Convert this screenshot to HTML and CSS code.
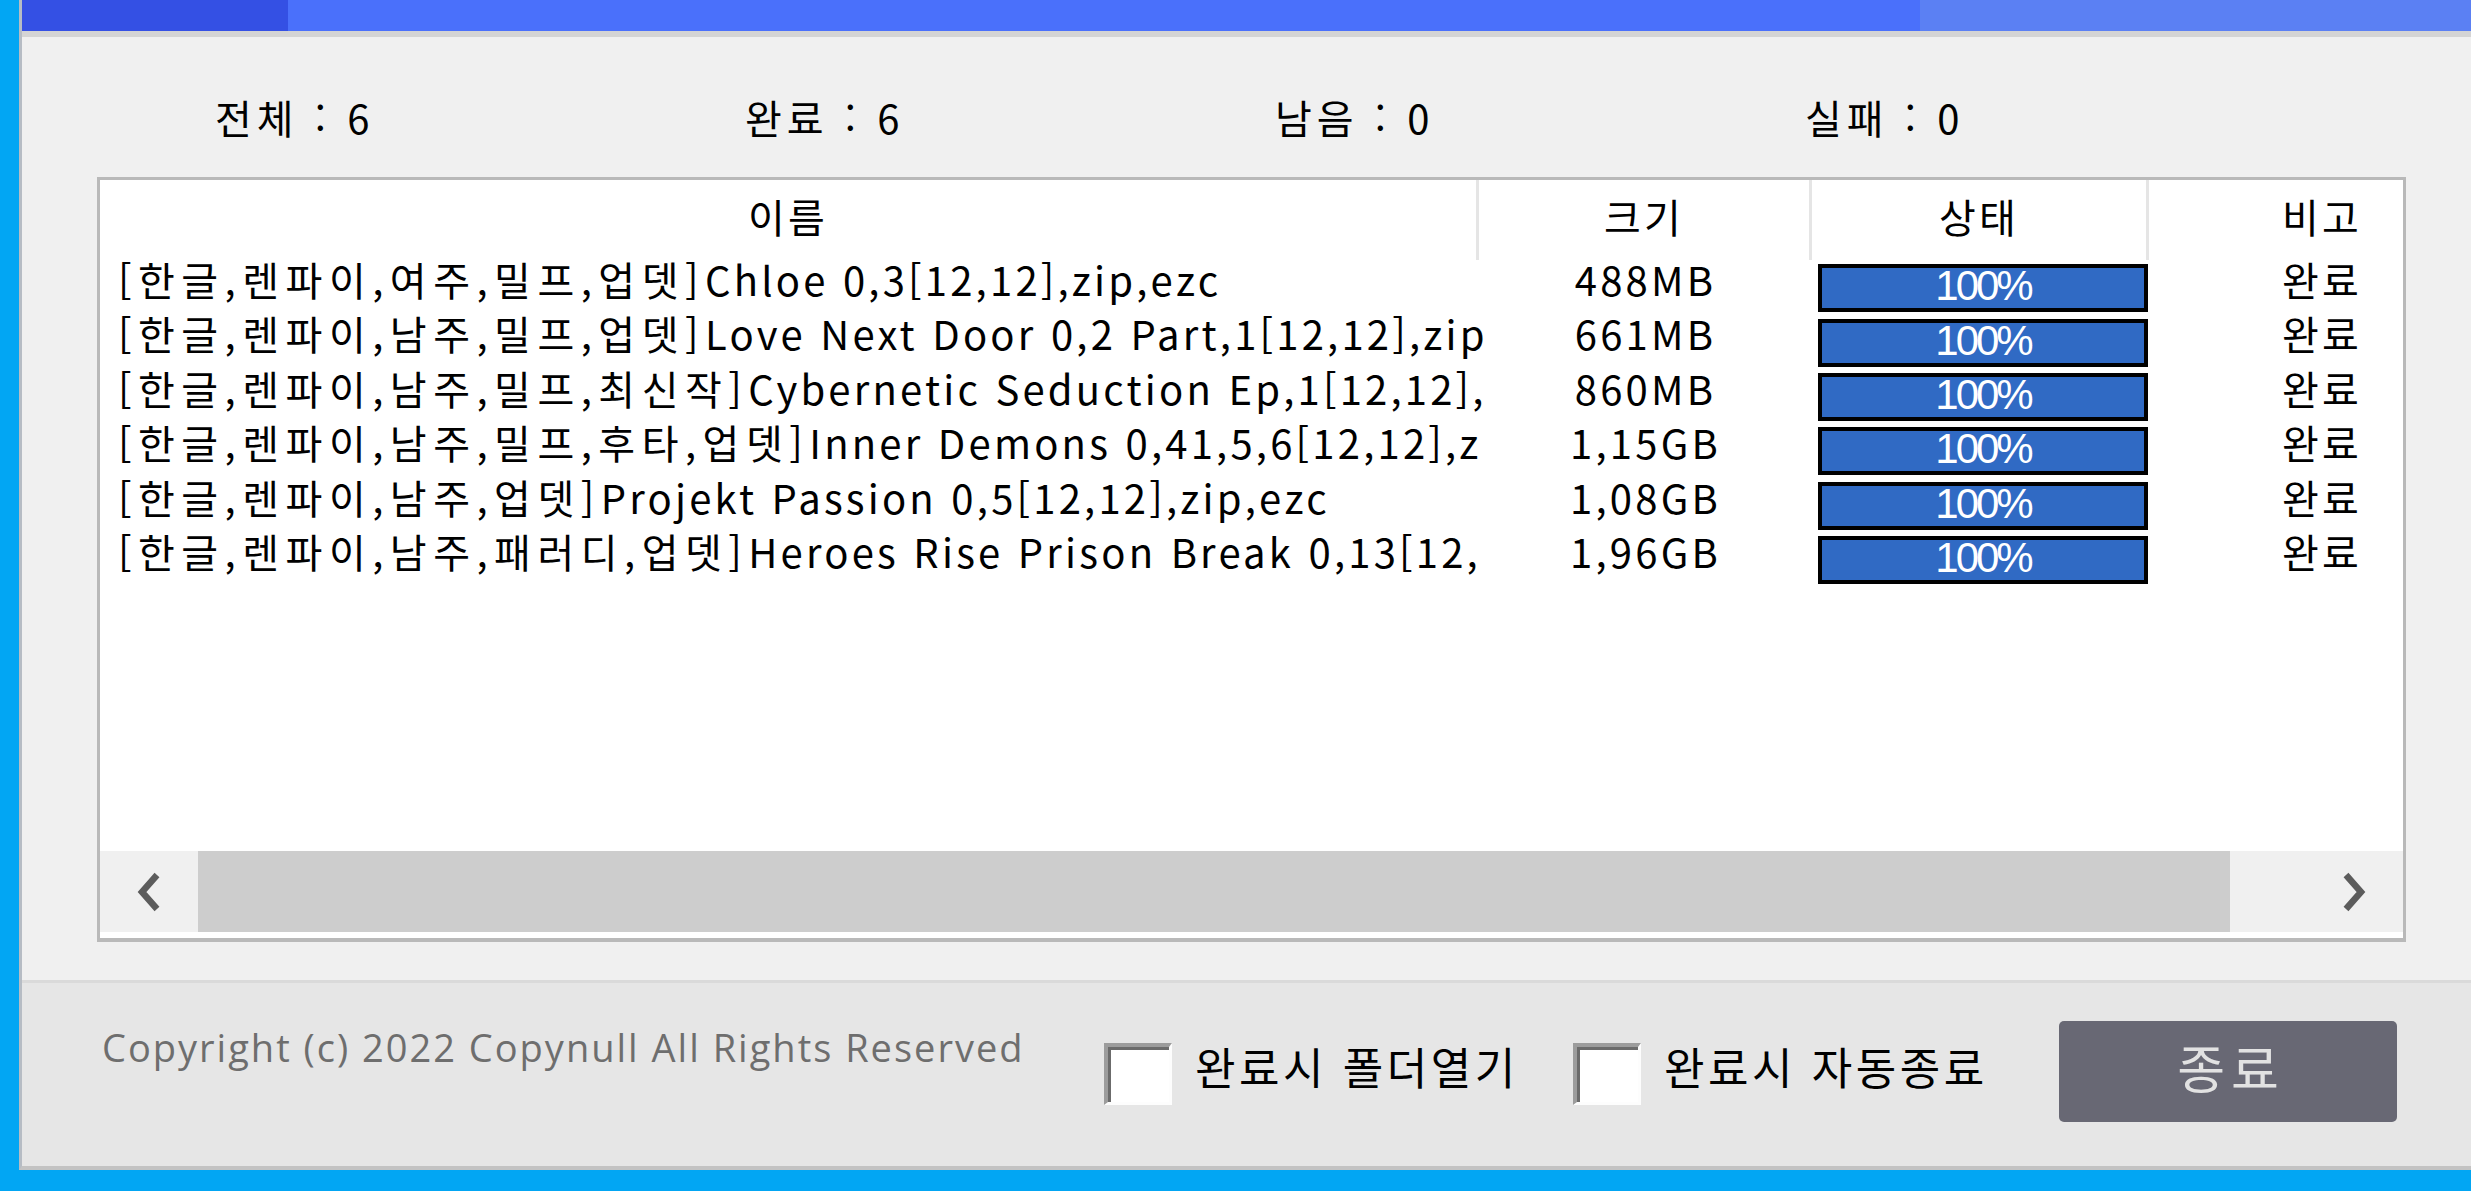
FILE: index.html
```html
<!DOCTYPE html>
<html lang="ko">
<head>
    <meta charset="UTF-8">
    <title>다운로드</title>
    <link rel="stylesheet" href="styles.css">
</head>
<body>

    <div class="window">
        <!-- Title strip -->
        <div class="titlebar">
            <div class="tab tab-active"></div>
            <div class="tab tab-mid"></div>
            <div class="tab tab-light"></div>
        </div>

        <div class="main">
            <!-- Counters -->
            <div class="stats">
                <span>전체 : 6</span>
                <span>완료 : 6</span>
                <span>남음 : 0</span>
                <span>실패 : 0</span>
            </div>

            <!-- File list -->
            <div class="list">
                <div class="list-view">
                    <div class="list-head">
                        <div class="head-cell">이름</div>
                        <div class="head-cell">크기</div>
                        <div class="head-cell">상태</div>
                        <div class="head-cell last">비고</div>
                    </div>

                    <div class="list-row">
                        <div class="cell-name"><span class="tag">[한글,렌파이,여주,밀프,업뎃]</span>Chloe 0,3[12,12],zip,ezc</div>
                        <div class="cell-size">488MB</div>
                        <div class="cell-state"><div class="bar">100%</div></div>
                        <div class="cell-note">완료</div>
                    </div>
                    <div class="list-row">
                        <div class="cell-name"><span class="tag">[한글,렌파이,남주,밀프,업뎃]</span>Love Next Door 0,2 Part,1[12,12],zip</div>
                        <div class="cell-size">661MB</div>
                        <div class="cell-state"><div class="bar">100%</div></div>
                        <div class="cell-note">완료</div>
                    </div>
                    <div class="list-row">
                        <div class="cell-name"><span class="tag">[한글,렌파이,남주,밀프,최신작]</span>Cybernetic Seduction Ep,1[12,12],</div>
                        <div class="cell-size">860MB</div>
                        <div class="cell-state"><div class="bar">100%</div></div>
                        <div class="cell-note">완료</div>
                    </div>
                    <div class="list-row">
                        <div class="cell-name"><span class="tag">[한글,렌파이,남주,밀프,후타,업뎃]</span>Inner Demons 0,41,5,6[12,12],z</div>
                        <div class="cell-size">1,15GB</div>
                        <div class="cell-state"><div class="bar">100%</div></div>
                        <div class="cell-note">완료</div>
                    </div>
                    <div class="list-row">
                        <div class="cell-name"><span class="tag">[한글,렌파이,남주,업뎃]</span>Projekt Passion 0,5[12,12],zip,ezc</div>
                        <div class="cell-size">1,08GB</div>
                        <div class="cell-state"><div class="bar">100%</div></div>
                        <div class="cell-note">완료</div>
                    </div>
                    <div class="list-row">
                        <div class="cell-name"><span class="tag">[한글,렌파이,남주,패러디,업뎃]</span>Heroes Rise Prison Break 0,13[12,</div>
                        <div class="cell-size">1,96GB</div>
                        <div class="cell-state"><div class="bar">100%</div></div>
                        <div class="cell-note">완료</div>
                    </div>
                </div>

                <!-- Horizontal scrollbar -->
                <div class="hscroll">
                    <div class="scroll-btn">
                        <svg width="28" height="40" viewBox="0 0 28 40"><polyline points="22,3 7,20 22,37" fill="none" stroke="#5c5c5c" stroke-width="6.5"/></svg>
                    </div>
                    <div class="scroll-track"><div class="scroll-thumb"></div></div>
                    <div class="scroll-btn">
                        <svg width="28" height="40" viewBox="0 0 28 40"><polyline points="6,3 21,20 6,37" fill="none" stroke="#5c5c5c" stroke-width="6.5"/></svg>
                    </div>
                </div>
            </div>
        </div>

        <!-- Footer -->
        <div class="footer">
            <span class="copyright">Copyright (c) 2022 Copynull All Rights Reserved</span>
            <span class="check"></span>
            <span class="opt-label">완료시 폴더열기</span>
            <span class="check second"></span>
            <span class="opt-label">완료시 자동종료</span>
            <button class="close-btn">종료</button>
        </div>
    </div>

</body>
</html>
```

FILE: styles.css
```css
/* General */
body {
    margin: 0;
    height: 1191px;
    background: #02a6f3;
    font-family: "Noto Sans CJK KR", sans-serif;
    color: #000;
    overflow: hidden;
}

.window {
    margin-left: 19px;
    height: 1170px;
    box-sizing: border-box;
    border-left: 3px solid #b6bcc4;
    border-bottom: 4px solid #c3c3c3;
    background: #f0f0f0;
    display: flex;
    flex-direction: column;
}

/* Title strip */
.titlebar {
    display: flex;
    height: 31px;
    border-bottom: 6px solid #d4d4d4;
}

.tab-active {
    width: 266px;
    background: #3450e4;
}

.tab-mid {
    flex: 1;
    background: #4a70fb;
}

.tab-light {
    width: 551px;
    background: #5b80f3;
}

/* Main area */
.main {
    height: 943px;
    box-sizing: border-box;
    padding: 50px 65px 0 75px;
    background: #f0f0f0;
}

.stats {
    display: grid;
    grid-template-columns: repeat(4, 530px);
    padding-left: 118px;
    height: 60px;
    line-height: 60px;
    font-size: 40px;
    letter-spacing: 5px;
    margin-bottom: 30px;
}

/* List */
.list {
    height: 765px;
    box-sizing: border-box;
    border: 3px solid #b9b9b9;
    border-bottom-width: 4px;
    background: #fff;
    display: flex;
    flex-direction: column;
}

.list-view {
    height: 671px;
    overflow: hidden;
    font-size: 40px;
    letter-spacing: 3.2px;
}

.list-head,
.list-row {
    display: grid;
    grid-template-columns: 1379px 333px 337px 346px;
}

.list-head {
    height: 80px;
    margin-bottom: 1px;
}

.head-cell {
    line-height: 72px;
    text-align: center;
    border-right: 3px solid #e5e5e5;
}

.head-cell.last {
    border-right: none;
}

.list-row {
    height: 54.4px;
    line-height: 36px;
    align-items: start;
}

.cell-name {
    padding-left: 18px;
    white-space: nowrap;
}

.tag {
    letter-spacing: 6.5px;
}

.cell-size,
.cell-note {
    text-align: center;
}

.cell-state {
    align-self: center;
}

.bar {
    width: 330px;
    height: 48px;
    margin-left: 6px;
    box-sizing: border-box;
    border: 4px solid #000;
    background: #306ac4;
    color: #fff;
    font-family: "Liberation Sans", sans-serif;
    font-size: 42px;
    letter-spacing: -3px;
    line-height: 35px;
    text-align: center;
}

/* Scrollbar */
.hscroll {
    display: flex;
    height: 81px;
    margin-top: auto;
    margin-bottom: 6px;
    background: #f0f0f0;
}

.scroll-btn {
    width: 98px;
    display: flex;
    align-items: center;
    justify-content: center;
}

.scroll-track {
    flex: 1;
}

.scroll-thumb {
    width: 2032px;
    height: 100%;
    background: #cdcdcd;
}

/* Footer */
.footer {
    flex: 1;
    display: flex;
    align-items: flex-start;
    padding-left: 80px;
    border-top: 3px solid #dadada;
    background: #e6e6e6;
}

.copyright {
    width: 1002px;
    flex: none;
    margin-top: 39px;
    font-family: "Open Sans", sans-serif;
    font-size: 38px;
    line-height: 50px;
    letter-spacing: 2px;
    color: #6e6e6e;
    white-space: nowrap;
}

.check {
    width: 68px;
    height: 62px;
    flex: none;
    margin-top: 60px;
    box-sizing: border-box;
    background: #fff;
    border-top: 4px solid #9c9c9c;
    border-left: 4px solid #9c9c9c;
    border-right: 3px solid #fdfdfd;
    border-bottom: 3px solid #fdfdfd;
    box-shadow: inset 3px 3px 0 #6b6b6b;
}

.check.second {
    margin-left: 56px;
}

.opt-label {
    width: 322px;
    margin-left: 23px;
    margin-top: 52px;
    font-size: 44px;
    line-height: 62px;
    letter-spacing: 3.5px;
    white-space: nowrap;
}

.close-btn {
    width: 338px;
    height: 101px;
    margin: 38px 74px 0 auto;
    border: none;
    border-radius: 5px;
    background: #686874;
    color: #e2e2e2;
    font-family: "Noto Sans CJK KR", sans-serif;
    font-size: 52px;
    letter-spacing: 6px;
    padding: 0 0 10px 6px;
    line-height: 91px;
}
```
